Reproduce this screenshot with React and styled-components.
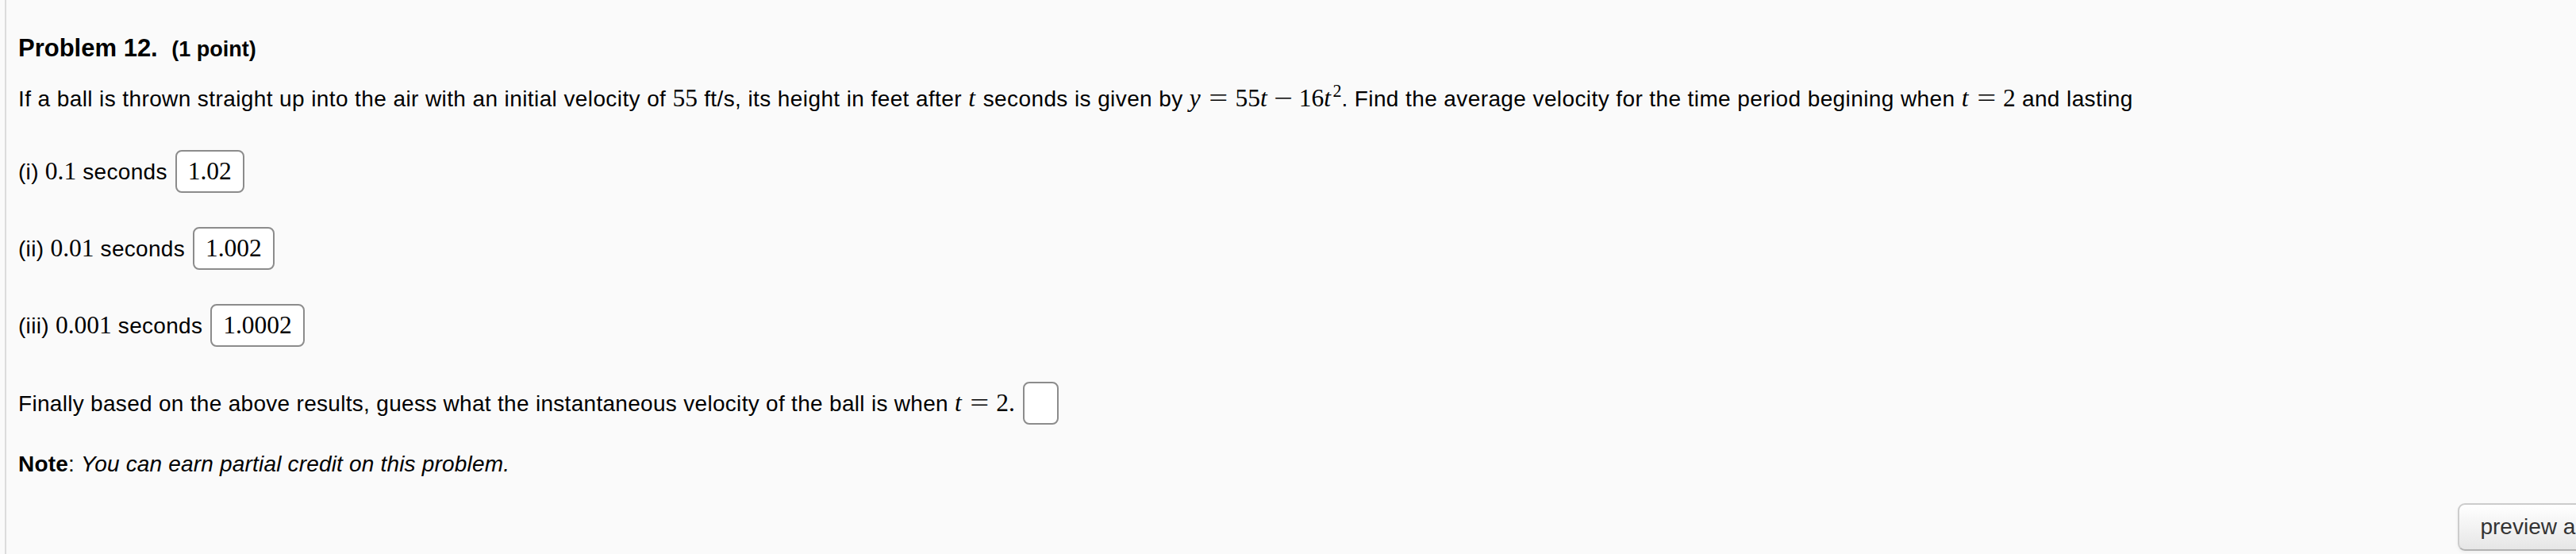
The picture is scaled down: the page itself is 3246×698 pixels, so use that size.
import React from 'react'
import styled, { createGlobalStyle } from 'styled-components'

const GlobalStyle = createGlobalStyle`
html, body {
    margin: 0;
    padding: 0;
    background: #fafafa;
    overflow: hidden;
}
body {
    font-family: "Liberation Sans", Arial, Helvetica, sans-serif;
    color: #000;
}
`

const App = () => {
    return (
        <>
            <GlobalStyle />
            <Page>
                <Heading>
                    Problem 12. <Points>(1 point)</Points>
                </Heading>
                <Para space={22} track={0.4}>
                    If a ball is thrown straight up into the air with an initial velocity of <Mjx>55</Mjx> ft/s, its
                    height in feet after <Mjx><Var>t</Var></Mjx> seconds is given by{' '}
                    <Mjx>
                        <Var>y</Var><Op>=</Op>55<Var>t</Var><Op narrow>−</Op>16<Var>t</Var><Sup>2</Sup>
                    </Mjx>
                    . Find the average velocity for the time period begining when{' '}
                    <Mjx><Var>t</Var><Op>=</Op>2</Mjx> and lasting
                </Para>
                <AnswerRow space={44}>
                    <span>(i) <Mjx>0.1</Mjx> seconds</span>
                    <AnswerBox>1.02</AnswerBox>
                </AnswerRow>
                <AnswerRow space={43}>
                    <span>(ii) <Mjx>0.01</Mjx> seconds</span>
                    <AnswerBox>1.002</AnswerBox>
                </AnswerRow>
                <AnswerRow space={43}>
                    <span>(iii) <Mjx>0.001</Mjx> seconds</span>
                    <AnswerBox>1.0002</AnswerBox>
                </AnswerRow>
                <AnswerRow space={44}>
                    <span>
                        Finally based on the above results, guess what the instantaneous velocity of the ball is
                        when <Mjx><Var>t</Var><Op>=</Op>2.</Mjx>
                    </span>
                    <AnswerBox empty />
                </AnswerRow>
                <Para space={30} track={0.18}>
                    <b>Note</b>: <i>You can earn partial credit on this problem.</i>
                </Para>
                <Footer>
                    <PreviewButton type="button">preview answers</PreviewButton>
                </Footer>
            </Page>
        </>
    )
}

export default App;

const Page = styled.div`
margin-left: 6px;
min-height: 100vh;
box-sizing: border-box;
border-left: 2px solid #dcdcdc;
padding: 41px 0 0 15px;
`
const Heading = styled.h3`
margin: 0;
font-size: 31px;
line-height: 40px;
font-weight: 700;
`
const Points = styled.span`
margin-left: 9px;
font-size: 27px;
`
const Para = styled.p`
margin: ${props => props.space}px 0 0;
font-size: 28px;
line-height: 40px;
letter-spacing: ${props => props.track}px;
white-space: nowrap;
`
const AnswerRow = styled.div`
display: flex;
align-items: center;
margin-top: ${props => props.space}px;
font-size: 28px;
line-height: 40px;
letter-spacing: 0.3px;
white-space: nowrap;
`
const Mjx = styled.span`
font-family: "Liberation Serif", "Times New Roman", serif;
font-size: 31.5px;
letter-spacing: 0;
`
const Var = styled.i`
font-style: italic;
padding-right: 0.05em;
`
const Op = styled.span`
display: inline-block;
width: 0.778em;
margin: 0 ${props => props.narrow ? '0.222em' : '0.278em'};
text-align: center;
transform: scaleX(1.35);
`
const Sup = styled.sup`
font-size: 0.7em;
line-height: 1;
vertical-align: 0.55em;
margin-left: 0.04em;
`
const AnswerBox = styled.span`
display: inline-flex;
align-items: center;
box-sizing: border-box;
height: 54px;
min-width: ${props => props.empty ? '45px' : '0'};
margin-left: 10px;
padding: 0 14px;
border: 2px solid #8c8c8c;
border-radius: 8px;
background: #fff;
font-family: "Liberation Serif", "Times New Roman", serif;
font-size: 31.5px;
letter-spacing: 0;
`
const Footer = styled.div`
display: flex;
justify-content: flex-end;
margin: 29px -116px 0 0;
`
const PreviewButton = styled.button`
height: 60px;
padding: 0 26px;
font-family: "Liberation Sans", Arial, sans-serif;
font-size: 28px;
color: #333;
background: linear-gradient(#ffffff, #e6e6e6);
border: 2px solid #cccccc;
border-bottom-color: #b3b3b3;
border-radius: 9px;
box-shadow: inset 0 2px 0 rgba(255, 255, 255, 0.2), 0 2px 4px rgba(0, 0, 0, 0.05);
`
